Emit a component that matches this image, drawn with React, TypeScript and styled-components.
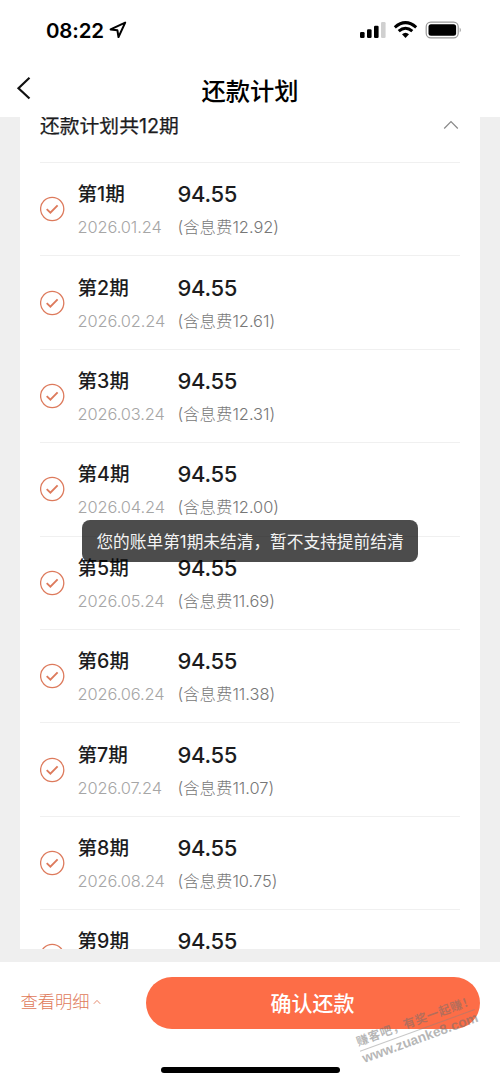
import React from 'react';
import styled, { createGlobalStyle } from 'styled-components';

const Global = createGlobalStyle`
  * { box-sizing: border-box; }
  body {
    margin: 0;
    background: #fff;
    color: #1c1c1e;
    font-family: Inter, "Noto Sans CJK SC", sans-serif;
  }
`;

const Screen = styled.div`
  position: relative;
  width: 500px;
  height: 1082px;
  display: flex;
  flex-direction: column;
  overflow: hidden;
  background: #fff;
`;

const StatusBar = styled.header`
  flex: none;
  height: 60px;
  display: flex;
  justify-content: space-between;
  padding: 0 38px 0 46px;
`;

const Clock = styled.div`
  display: flex;
  align-items: center;
  gap: 5px;
  height: 60px;
  color: #000;
  font-size: 20.5px;
  font-weight: 600;
  letter-spacing: -0.15px;
`;

const StatusIcons = styled.div`
  display: flex;
  align-items: center;
  height: 59px;
`;

const NavBar = styled.nav`
  flex: none;
  height: 57px;
  display: grid;
  grid-template-columns: 60px 1fr 60px;
  align-items: center;
`;

const BackButton = styled.button`
  border: 0;
  background: none;
  padding: 0 0 1px 16px;
  height: 57px;
  display: flex;
  align-items: center;
`;

const Title = styled.h1`
  margin: 4px 0 0;
  color: #000;
  text-align: center;
  font-size: 24.3px;
  line-height: 36px;
  font-weight: 500;
`;

const Scroller = styled.main`
  flex: none;
  height: 845px;
  padding: 0 20px 13px;
  background: #efefef;
`;

const Card = styled.section`
  height: 832px;
  padding: 0 20px;
  overflow: hidden;
  background: #fff;
`;

const CardHeader = styled.div`
  height: 45px;
  display: flex;
  justify-content: space-between;
  align-items: flex-start;
  font-size: 19.8px;
  line-height: 28px;
  padding: 0 1px 0 0;

  span {
    margin-top: -5px;
    -webkit-text-stroke: 0.25px currentColor;
  }
  svg { margin-top: 3px; }
`;

const Row = styled.div`
  height: 93.4px;
  display: grid;
  grid-template-columns: 37.5px 100px 1fr;
  border-top: 1px solid #f0f0f0;
`;

const CheckCell = styled.div`
  padding-top: 33.3px;
  line-height: 0;
`;

const Cell = styled.div`
  display: flex;
  flex-direction: column;
  white-space: nowrap;
`;

const Term = styled.div`
  margin-top: 16.2px;
  font-size: 19.6px;
  line-height: 30px;
  font-weight: 500;
`;

const Amount = styled(Term)`
  font-size: 22px;
  letter-spacing: -0.3px;
`;

const DueDate = styled.div`
  margin-top: 5.1px;
  color: #a6a6a6;
  font-size: 16.4px;
  line-height: 26px;
  font-weight: 300;
  letter-spacing: -0.1px;
`;

const Interest = styled(DueDate)`
  color: #777;
  letter-spacing: 0;
`;

const Footer = styled.footer`
  flex: 1;
  display: flex;
  align-items: flex-start;
  justify-content: space-between;
  padding: 15px 20px 0 20.5px;
`;

const DetailsLink = styled.button`
  border: 0;
  background: none;
  padding: 0;
  margin-top: 10px;
  height: 26px;
  display: flex;
  align-items: center;
  gap: 3px;
  color: #e07a5a;
  font-family: inherit;
  font-size: 17.3px;
  font-weight: 300;

  svg { margin-top: 3px; }
`;

const ConfirmButton = styled.button`
  width: 334px;
  height: 52px;
  border: 0;
  border-radius: 26px;
  padding: 0 1px 2px 0;
  background: #fd6d47;
  color: #fff;
  font-family: inherit;
  font-size: 21px;
  font-weight: 500;
`;

const Toast = styled.div`
  position: absolute;
  left: 82px;
  top: 520px;
  width: 336px;
  height: 42px;
  border-radius: 8px;
  background: rgba(0, 0, 0, 0.7);
  color: #f4f4f4;
  text-align: center;
  white-space: nowrap;
  font-size: 16.7px;
  line-height: 44px;
`;

const HomeIndicator = styled.div`
  position: absolute;
  left: 161px;
  bottom: 9px;
  width: 179px;
  height: 6px;
  border-radius: 3px;
  background: #000;
`;

const Watermark = styled.div`
  position: absolute;
  left: 356px;
  top: 1012px;
  width: 122px;
  transform: rotate(-20deg);
  color: rgba(110, 110, 110, 0.5);
  white-space: nowrap;
  font-weight: 700;
`;

const WatermarkSlogan = styled.div`
  border-bottom: 1px solid rgba(130, 130, 130, 0.45);
  font-size: 12px;
  line-height: 18px;
  letter-spacing: 0.5px;
`;

const WatermarkSite = styled.div`
  font-family: "Liberation Sans", sans-serif;
  font-size: 13.8px;
  line-height: 16px;
`;

const CheckIcon = () => (
  <svg width="25" height="26" viewBox="0 0 25 26" fill="none" stroke="#dd7a5c">
    <circle cx="12.2" cy="13" r="11.6" strokeWidth="1.3" />
    <path d="M6.7 13.1 10.4 16.6 17.6 9.4" strokeWidth="1.9" />
  </svg>
);

const interests = ['12.92', '12.61', '12.31', '12.00', '11.69', '11.38', '11.07', '10.75', '10.43'];

export default function App() {
  return (
    <Screen>
      <Global />
      <StatusBar>
        <Clock>
          08:22
          <svg width="18" height="18" viewBox="0 0 18 18" fill="none" stroke="#000" strokeWidth="2" strokeLinejoin="round">
            <path d="M16.2 1.6 1.6 8.4 8.4 9.3 9.5 16Z" />
          </svg>
        </Clock>
        <StatusIcons>
          <svg width="103" height="20" viewBox="0 0 103 20">
            <rect x="1" y="12" width="4.6" height="6" rx="1.2" />
            <rect x="8" y="9.3" width="4.6" height="8.7" rx="1.2" />
            <rect x="15" y="5.7" width="4.6" height="12.3" rx="1.2" />
            <rect x="22" y="2" width="4.6" height="16" rx="1.2" fill="#d0d0d0" />
            <g fill="none" stroke="#000" strokeWidth="3">
              <path d="M35.8 7.3Q46.5-2 57.2 7.3" />
              <path d="M39.7 11.2Q46.5 5.2 53.3 11.2" />
            </g>
            <path d="M43 14.3Q46.5 11.3 50 14.3L46.5 18Z" />
            <rect x="67.2" y="2.2" width="32" height="15.6" rx="4.6" fill="none" stroke="#999" strokeWidth="1.2" />
            <rect x="69.5" y="4.3" width="27.6" height="11.4" rx="2.5" />
            <path d="M100.7 7.5Q103 10 100.7 12.5Z" fill="#999" />
          </svg>
        </StatusIcons>
      </StatusBar>
      <NavBar>
        <BackButton aria-label="返回">
          <svg width="16" height="24" viewBox="0 0 16 24" fill="none" stroke="#111" strokeWidth="2.2">
            <path d="M13.5 1.8 2.5 12.2 13.5 22.5" />
          </svg>
        </BackButton>
        <Title>还款计划</Title>
      </NavBar>
      <Scroller>
        <Card>
          <CardHeader>
            <span>还款计划共12期</span>
            <svg width="16" height="10" viewBox="0 0 16 10" fill="none" stroke="#888" strokeWidth="1.2">
              <path d="M1.2 8.5 8 1.5 14.8 8.5" />
            </svg>
          </CardHeader>
          {interests.map((interest, i) => (
            <Row key={interest}>
              <CheckCell><CheckIcon /></CheckCell>
              <Cell>
                <Term>第{i + 1}期</Term>
                <DueDate>2026.0{i + 1}.24</DueDate>
              </Cell>
              <Cell>
                <Amount>94.55</Amount>
                <Interest>(含息费{interest})</Interest>
              </Cell>
            </Row>
          ))}
        </Card>
      </Scroller>
      <Footer>
        <DetailsLink>
          查看明细
          <svg width="8" height="6" viewBox="0 0 8 6" fill="none" stroke="#e38061" strokeWidth="0.9">
            <path d="M0.8 4.8 4 1.4 7.2 4.8" />
          </svg>
        </DetailsLink>
        <ConfirmButton>确认还款</ConfirmButton>
      </Footer>
      <Toast>您的账单第1期未结清，暂不支持提前结清</Toast>
      <Watermark>
        <WatermarkSlogan>赚客吧，有奖一起赚！</WatermarkSlogan>
        <WatermarkSite>www.zuanke8.com</WatermarkSite>
      </Watermark>
      <HomeIndicator />
    </Screen>
  );
}
